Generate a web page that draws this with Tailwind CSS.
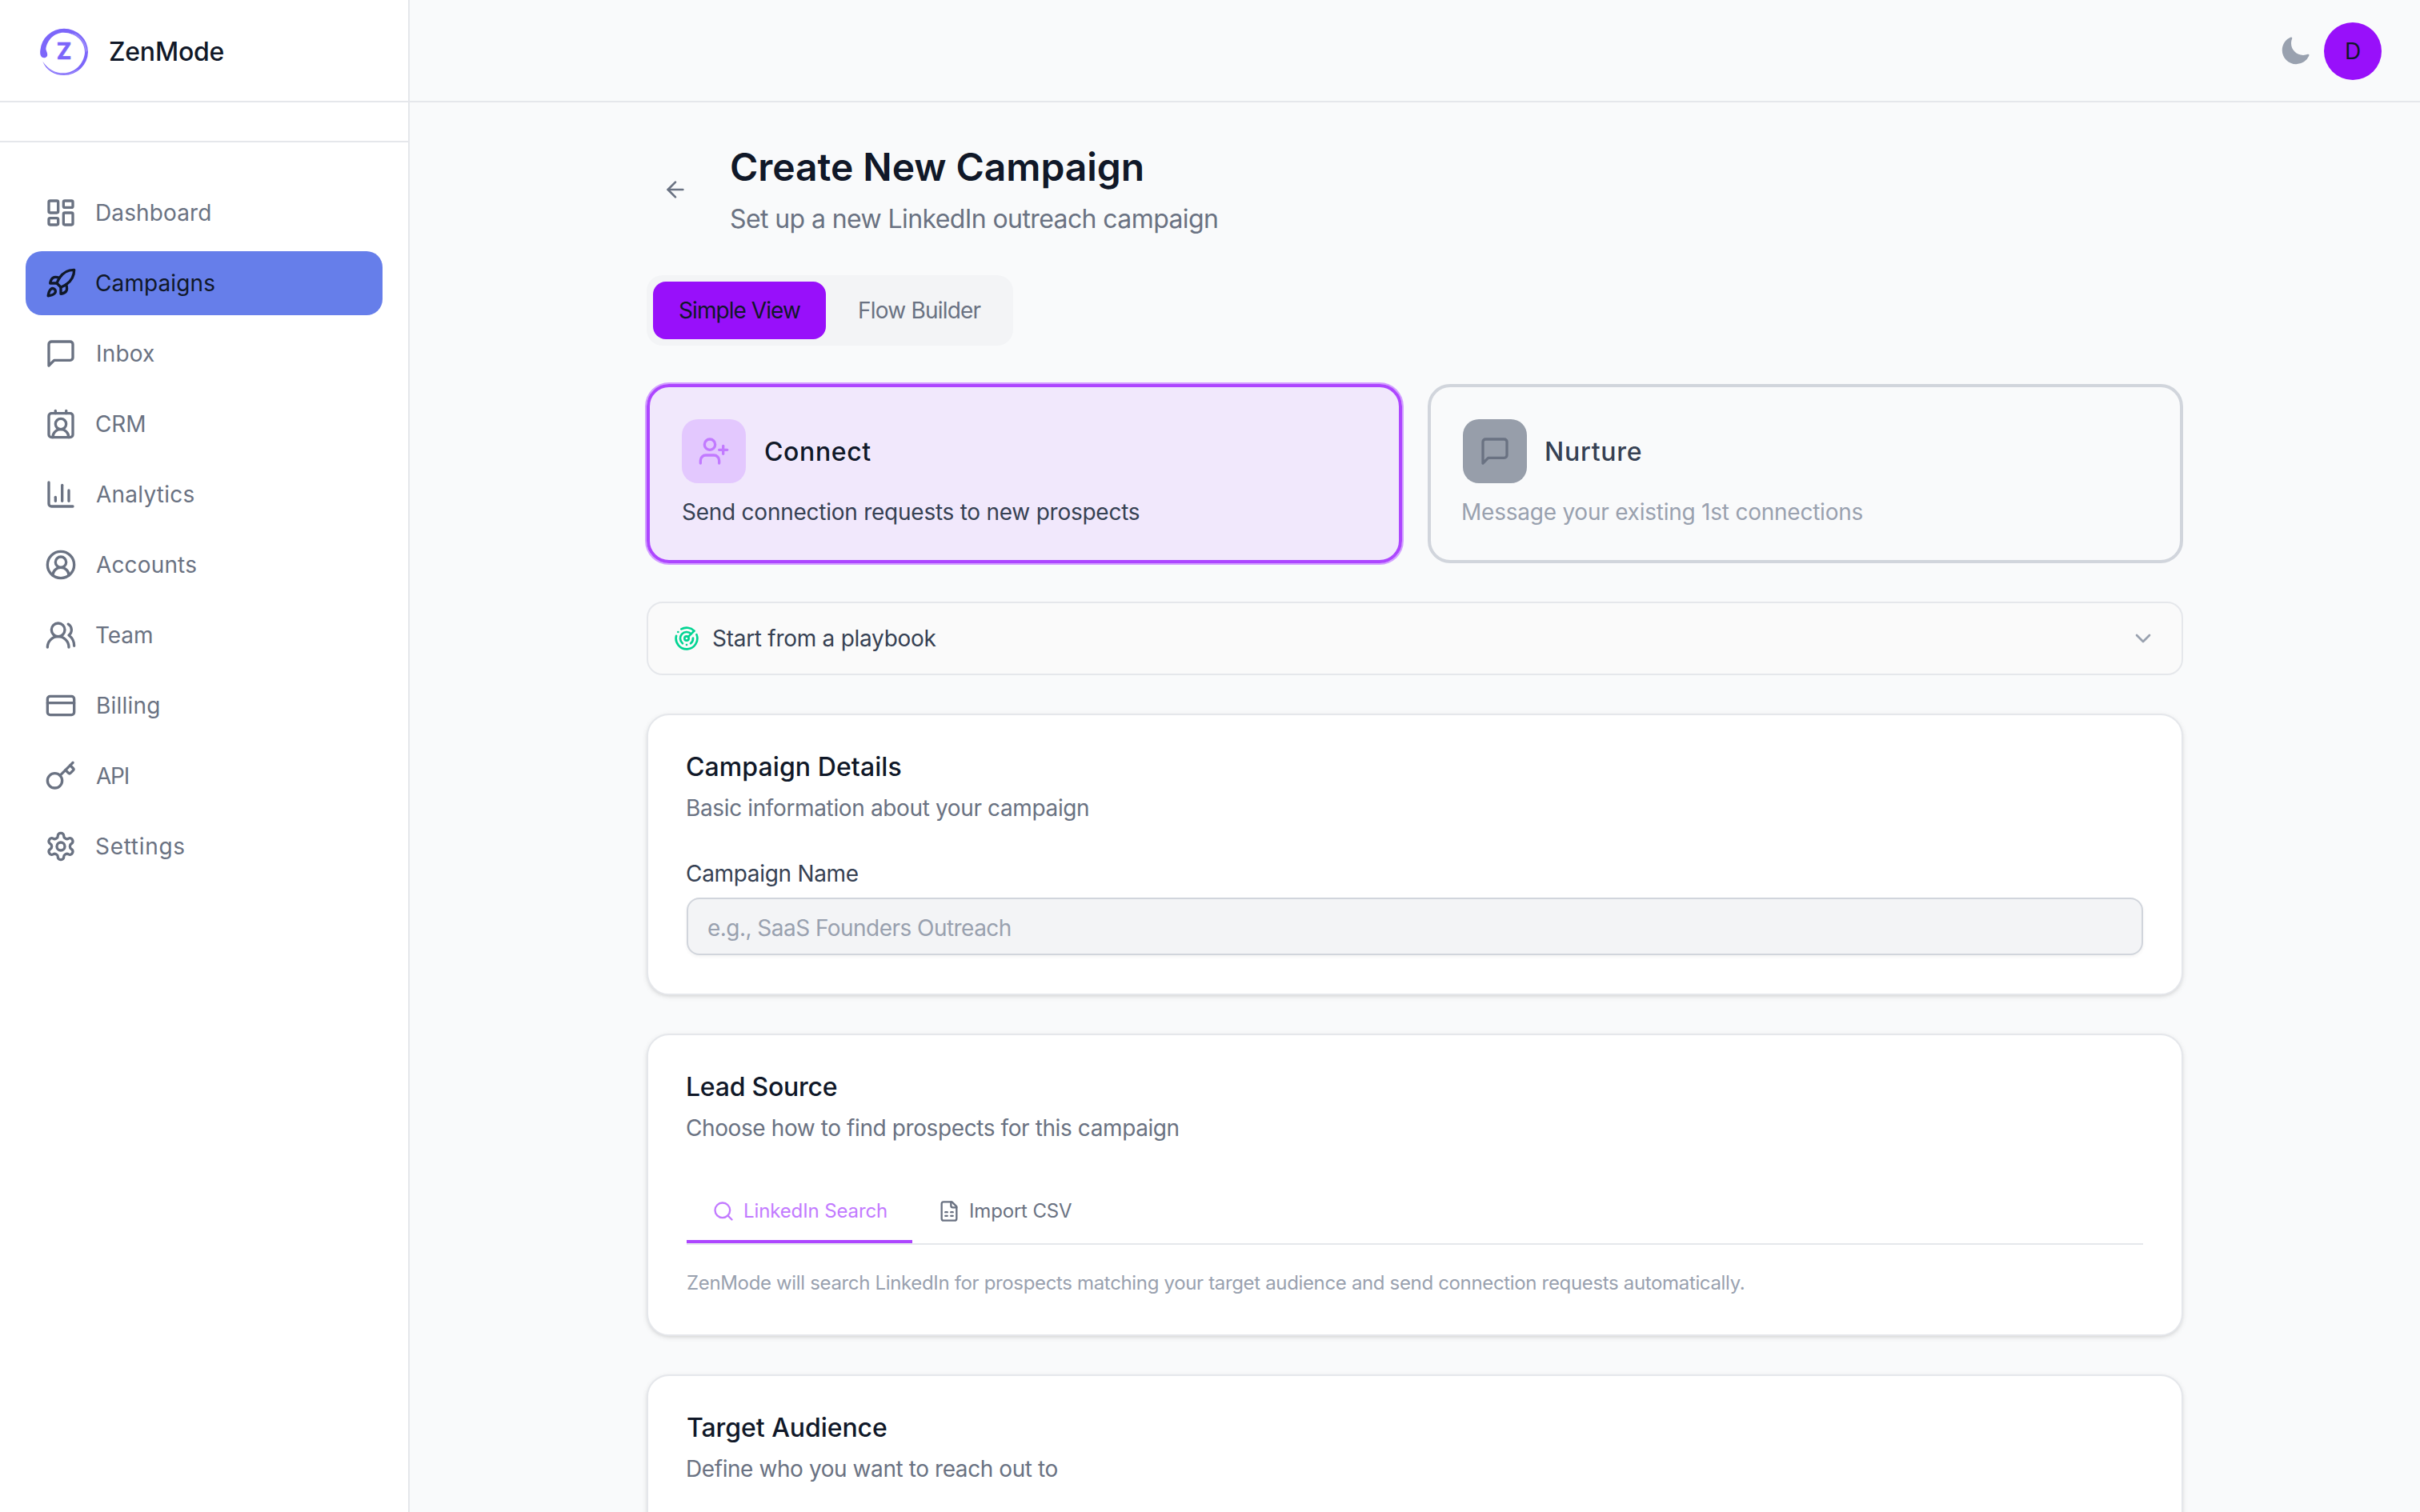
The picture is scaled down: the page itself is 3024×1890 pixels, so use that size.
<!DOCTYPE html>
<html lang="en">
<head>
    <meta charset="UTF-8">
    <meta name="viewport" content="width=device-width, initial-scale=1.0">
    <title>ZenMode - Create New Campaign</title>
    <script src="https://cdn.jsdelivr.net/npm/@tailwindcss/browser@4"></script>
</head>
<body class="flex h-screen overflow-hidden bg-gray-50 font-['Inter',sans-serif] text-[28px] leading-10 text-gray-900">
    <!-- Sidebar -->
    <aside class="flex w-128 shrink-0 flex-col border-r-2 border-gray-200 bg-white">
        <div class="flex h-32 shrink-0 items-center gap-6 border-b-2 border-gray-200 px-12 pt-0.5">
            <svg class="size-16 shrink-0" viewBox="24 36 192 192">
                <path fill="#7c66fa" d="M34 151C30 145 30 135 31 128A89 88 0 0 1 120 47A90 88 0 0 1 210 135A90 88 0 0 1 120 222C84 222 52 202 40 170C60 200 86 214 118 214C160 214 194 180 198 138C199 96 166 63 118 62C84 62 56 90 52 124C54 134 60 142 57 150C52 158 40 160 34 151Z"/>
                <path fill="none" stroke="#fff" stroke-width="1.5" stroke-opacity=".6" d="M58 194C76 211 98 218 122 218C142 217 158 211 172 201M150 66C180 77 200 102 202 136M160 66C186 79 204 104 205 132"/>
                <text x="120" y="162" text-anchor="middle" font-family="Inter, sans-serif" font-weight="700" font-size="84" fill="#7c66fa" stroke="#7c66fa" stroke-width="2">Z</text>
            </svg>
            <span class="pt-0.5 text-[32px] font-medium tracking-[-0.0066em]">ZenMode</span>
        </div>
        <div class="h-[50px] shrink-0 border-b-2 border-gray-200"></div>
        <nav class="flex flex-col gap-2 px-8 pt-12 text-gray-500">
            <a class="flex h-20 items-center gap-[23px] rounded-[20px] px-6">
                <svg class="size-10" viewBox="0 0 24 24" fill="none" stroke="currentColor" stroke-width="2" stroke-linecap="round" stroke-linejoin="round"><rect width="7" height="9" x="3" y="3" rx="1"/><rect width="7" height="5" x="14" y="3" rx="1"/><rect width="7" height="9" x="14" y="12" rx="1"/><rect width="7" height="5" x="3" y="16" rx="1"/></svg>
                <span class="tracking-[0.004em]">Dashboard</span>
            </a>
            <a class="flex h-20 items-center gap-[23px] rounded-[20px] bg-[#667eea] px-6 text-gray-900">
                <svg class="size-10" viewBox="0 0 24 24" fill="none" stroke="currentColor" stroke-width="2" stroke-linecap="round" stroke-linejoin="round"><path d="M4.5 16.5c-1.5 1.26-2 5-2 5s3.74-.5 5-2c.71-.84.7-2.13-.09-2.91a2.18 2.18 0 0 0-2.91-.09z"/><path d="m12 15-3-3a22 22 0 0 1 2-3.95A12.88 12.88 0 0 1 22 2c0 2.72-.78 7.5-6 11a22.35 22.35 0 0 1-4 2z"/><path d="M9 12H4s.55-3.03 2-4c1.62-1.08 5 0 5 0"/><path d="M12 15v5s3.03-.55 4-2c1.08-1.62 0-5 0-5"/></svg>
                <span class="tracking-[0.0036em]">Campaigns</span>
            </a>
            <a class="flex h-20 items-center gap-6 rounded-[20px] px-6">
                <svg class="size-10" viewBox="0 0 24 24" fill="none" stroke="currentColor" stroke-width="2" stroke-linecap="round" stroke-linejoin="round"><path d="M21 15a2 2 0 0 1-2 2H7l-4 4V5a2 2 0 0 1 2-2h14a2 2 0 0 1 2 2z"/></svg>
                <span class="tracking-[0.006em]">Inbox</span>
            </a>
            <a class="flex h-20 items-center gap-[23px] rounded-[20px] px-6">
                <svg class="size-10" viewBox="0 0 24 24" fill="none" stroke="currentColor" stroke-width="2" stroke-linecap="round" stroke-linejoin="round"><path d="M16 2v2"/><path d="M17.915 22a6 6 0 0 0-12 0"/><path d="M8 2v2"/><circle cx="12" cy="12" r="4"/><rect x="3" y="4" width="18" height="18" rx="2"/></svg>
                <span class="tracking-[-0.0062em]">CRM</span>
            </a>
            <a class="flex h-20 items-center gap-6 rounded-[20px] px-6">
                <svg class="size-10" viewBox="0 0 24 24" fill="none" stroke="currentColor" stroke-width="2" stroke-linecap="round" stroke-linejoin="round"><path d="M3 3v16a2 2 0 0 0 2 2h16"/><path d="M18 17V9"/><path d="M13 17V5"/><path d="M8 17v-3"/></svg>
                <span class="tracking-[0.0084em]">Analytics</span>
            </a>
            <a class="flex h-20 items-center gap-6 rounded-[20px] px-6">
                <svg class="size-10" viewBox="0 0 24 24" fill="none" stroke="currentColor" stroke-width="2" stroke-linecap="round" stroke-linejoin="round"><path d="M18 20a6 6 0 0 0-12 0"/><circle cx="12" cy="10" r="4"/><circle cx="12" cy="12" r="10"/></svg>
                <span class="tracking-[0.0055em]">Accounts</span>
            </a>
            <a class="flex h-20 items-center gap-[23px] rounded-[20px] px-6">
                <svg class="size-10" viewBox="0 0 24 24" fill="none" stroke="currentColor" stroke-width="2" stroke-linecap="round" stroke-linejoin="round"><path d="M18 21a8 8 0 0 0-16 0"/><circle cx="10" cy="8" r="5"/><path d="M22 20c0-3.37-2-6.5-4-8a5 5 0 0 0-.45-8.3"/></svg>
                <span class="tracking-[-0.0029em]">Team</span>
            </a>
            <a class="flex h-20 items-center gap-6 rounded-[20px] px-6">
                <svg class="size-10" viewBox="0 0 24 24" fill="none" stroke="currentColor" stroke-width="2" stroke-linecap="round" stroke-linejoin="round"><rect width="20" height="14" x="2" y="5" rx="2"/><path d="M2 10h20"/></svg>
                <span class="tracking-[0.007em]">Billing</span>
            </a>
            <a class="flex h-20 items-center gap-6 rounded-[20px] px-6">
                <svg class="size-10" viewBox="0 0 24 24" fill="none" stroke="currentColor" stroke-width="2" stroke-linecap="round" stroke-linejoin="round"><path d="m15.5 7.5 2.3 2.3a1 1 0 0 0 1.4 0l2.1-2.1a1 1 0 0 0 0-1.4L19 4"/><path d="m21 2-9.6 9.6"/><circle cx="7.5" cy="15.5" r="5.5"/></svg>
                <span class="tracking-[-0.0433em]">API</span>
            </a>
            <a class="flex h-20 items-center gap-[23px] rounded-[20px] px-6">
                <svg class="size-10" viewBox="0 0 24 24" fill="none" stroke="currentColor" stroke-width="2" stroke-linecap="round" stroke-linejoin="round"><path d="M12.22 2h-.44a2 2 0 0 0-2 2v.18a2 2 0 0 1-1 1.73l-.43.25a2 2 0 0 1-2 0l-.15-.08a2 2 0 0 0-2.73.73l-.22.38a2 2 0 0 0 .73 2.73l.15.1a2 2 0 0 1 1 1.72v.51a2 2 0 0 1-1 1.74l-.15.09a2 2 0 0 0-.73 2.73l.22.38a2 2 0 0 0 2.73.73l.15-.08a2 2 0 0 1 2 0l.43.25a2 2 0 0 1 1 1.73V20a2 2 0 0 0 2 2h.44a2 2 0 0 0 2-2v-.18a2 2 0 0 1 1-1.73l.43-.25a2 2 0 0 1 2 0l.15.08a2 2 0 0 0 2.73-.73l.22-.39a2 2 0 0 0-.73-2.73l-.15-.08a2 2 0 0 1-1-1.74v-.5a2 2 0 0 1 1-1.74l.15-.09a2 2 0 0 0 .73-2.73l-.22-.38a2 2 0 0 0-2.73-.73l-.15.08a2 2 0 0 1-2 0l-.43-.25a2 2 0 0 1-1-1.73V4a2 2 0 0 0-2-2z"/><circle cx="12" cy="12" r="3"/></svg>
                <span class="tracking-[0.0251em]">Settings</span>
            </a>
        </nav>
    </aside>

    <div class="flex min-w-0 flex-1 flex-col">
        <!-- Header -->
        <header class="flex h-32 shrink-0 items-center justify-end gap-4 border-b-2 border-gray-200 px-12 pt-0.5">
            <svg class="size-10 text-gray-400" viewBox="0 0 24 24" fill="currentColor"><path d="M9.528 1.718a.75.75 0 0 1 .162.819A8.97 8.97 0 0 0 9 6a9 9 0 0 0 9 9 8.97 8.97 0 0 0 3.463-.69.75.75 0 0 1 .981.98 10.503 10.503 0 0 1-9.694 6.46c-5.799 0-10.5-4.7-10.5-10.5 0-4.368 2.667-8.112 6.46-9.694a.75.75 0 0 1 .818.162Z"/></svg>
            <div class="flex size-18 items-center justify-center rounded-full bg-purple-600">D</div>
        </header>

        <!-- Main Content -->
        <main class="min-h-0 flex-1 overflow-hidden pt-12">
            <div class="mx-auto flex w-[1920px] flex-col gap-12">
                <div class="flex items-center gap-8">
                    <button class="flex size-18 items-center justify-center text-gray-500">
                        <svg class="size-8" viewBox="0 0 24 24" fill="none" stroke="currentColor" stroke-width="2" stroke-linecap="round" stroke-linejoin="round"><path d="m12 19-7-7 7-7"/><path d="M19 12H5"/></svg>
                    </button>
                    <div>
                        <h1 class="text-5xl leading-[66px] font-semibold tracking-[-0.0014em]">Create New Campaign</h1>
                        <p class="mt-2 text-[32px] leading-12 tracking-[-0.0187em] text-gray-500">Set up a new LinkedIn outreach campaign</p>
                    </div>
                </div>

                <!-- View Toggle -->
                <div class="-mt-0.5 flex h-22 w-[458px] gap-2 rounded-[20px] bg-gray-100 p-2">
                    <button class="w-54 rounded-2xl bg-purple-600 pl-8 text-left tracking-[-0.0333em] whitespace-nowrap">Simple View</button>
                    <button class="w-[218px] rounded-2xl pl-8 text-left tracking-[-0.0282em] whitespace-nowrap text-gray-500">Flow Builder</button>
                </div>

                <!-- Campaign Type -->
                <div class="grid grid-cols-2 gap-8">
                    <div class="h-56 rounded-[28px] border-4 border-purple-500 bg-purple-500/10 p-10 ring-2 ring-purple-500/50">
                        <div class="flex items-center gap-[23px]">
                            <div class="flex size-20 items-center justify-center rounded-[20px] bg-purple-500/20 text-purple-400">
                                <svg class="size-10" viewBox="0 0 24 24" fill="none" stroke="currentColor" stroke-width="2" stroke-linecap="round" stroke-linejoin="round"><path d="M16 21v-2a4 4 0 0 0-4-4H6a4 4 0 0 0-4 4v2"/><circle cx="9" cy="7" r="4"/><path d="M19 8v6"/><path d="M22 11h-6"/></svg>
                            </div>
                            <h3 class="pt-0.5 text-[32px] font-medium tracking-[0.0195em]">Connect</h3>
                        </div>
                        <p class="mt-4 tracking-[-0.0089em] text-gray-700">Send connection requests to new prospects</p>
                    </div>
                    <div class="h-56 rounded-[28px] border-4 border-gray-300 p-10">
                        <div class="flex items-center gap-[22px]">
                            <div class="flex size-20 items-center justify-center rounded-[20px] bg-[#979eaa] text-gray-500">
                                <svg class="size-10" viewBox="0 0 24 24" fill="none" stroke="currentColor" stroke-width="2" stroke-linecap="round" stroke-linejoin="round"><path d="M21 15a2 2 0 0 1-2 2H7l-4 4V5a2 2 0 0 1 2-2h14a2 2 0 0 1 2 2z"/></svg>
                            </div>
                            <h3 class="pt-0.5 text-[32px] font-medium tracking-[0.0235em] text-gray-700">Nurture</h3>
                        </div>
                        <p class="mt-4 -ml-0.5 tracking-[-0.0084em] text-gray-400">Message your existing 1st connections</p>
                    </div>
                </div>

                <!-- Playbook -->
                <div class="flex h-23 items-center gap-4 rounded-[20px] border-2 border-gray-200 bg-neutral-50 px-8">
                    <svg class="size-8 text-emerald-400" viewBox="0 0 24 24" fill="none" stroke="currentColor" stroke-width="2" stroke-linecap="round" stroke-linejoin="round"><path d="M19.07 4.93A10 10 0 0 0 6.99 3.34"/><path d="M4 6h.01"/><path d="M2.29 9.62A10 10 0 1 0 21.31 8.35"/><path d="M16.24 7.76A6 6 0 1 0 8.23 16.67"/><path d="M12 18h.01"/><path d="M17.99 11.66A6 6 0 0 1 15.77 16.67"/><circle cx="12" cy="12" r="2"/><path d="m13.41 10.59 5.66-5.66"/></svg>
                    <span class="flex-1 tracking-[-0.0098em] text-gray-700">Start from a playbook</span>
                    <svg class="size-8 text-gray-400" viewBox="0 0 24 24" fill="none" stroke="currentColor" stroke-width="2" stroke-linecap="round" stroke-linejoin="round"><path d="m6 9 6 6 6-6"/></svg>
                </div>

                <!-- Campaign Details -->
                <section class="rounded-[28px] border-2 border-gray-200 bg-white p-12 shadow-[0_2px_6px_rgba(0,0,0,0.1),0_2px_4px_-2px_rgba(0,0,0,0.1)]">
                    <h2 class="-ml-px text-[32px] leading-[34px] font-medium tracking-[0.0026em]">Campaign Details</h2>
                    <p class="mt-3.5 -ml-px tracking-[-0.0131em] text-gray-500">Basic information about your campaign</p>
                    <label class="mt-12 -ml-px block leading-7 tracking-[-0.0112em] text-gray-700">Campaign Name</label>
                    <input type="text" placeholder="e.g., SaaS Founders Outreach" class="mt-4 block h-18 w-full rounded-2xl border-2 border-gray-300 bg-gray-100 px-6 pt-1 tracking-[-0.0192em] shadow-[0_2px_4px_rgba(0,0,0,0.05)] placeholder:text-gray-400">
                </section>

                <!-- Lead Source -->
                <section class="rounded-[28px] border-2 border-gray-200 bg-white p-12 shadow-[0_2px_6px_rgba(0,0,0,0.1),0_2px_4px_-2px_rgba(0,0,0,0.1)]">
                    <h2 class="-ml-px text-[32px] leading-[34px] font-medium tracking-[-0.0074em]">Lead Source</h2>
                    <p class="mt-3.5 -ml-px tracking-[-0.0144em] text-gray-500">Choose how to find prospects for this campaign</p>
                    <div class="mt-12 flex h-[78px] border-b-2 border-gray-200 text-2xl">
                        <button class="flex w-[282px] items-center gap-[11px] border-b-4 border-purple-500 pl-8 whitespace-nowrap text-purple-400">
                            <svg class="size-7" viewBox="0 0 24 24" fill="none" stroke="currentColor" stroke-width="2" stroke-linecap="round" stroke-linejoin="round"><circle cx="11" cy="11" r="8"/><path d="m21 21-4.3-4.3"/></svg>
                            <span class="tracking-[-0.0048em]">LinkedIn Search</span>
                        </button>
                        <button class="flex items-center gap-[11px] border-b-4 border-transparent px-8 whitespace-nowrap text-gray-500">
                            <svg class="size-7" viewBox="0 0 24 24" fill="none" stroke="currentColor" stroke-width="2" stroke-linecap="round" stroke-linejoin="round"><path d="M15 2H6a2 2 0 0 0-2 2v16a2 2 0 0 0 2 2h12a2 2 0 0 0 2-2V7Z"/><path d="M14 2v4a2 2 0 0 0 2 2h4"/><path d="M8 13h2"/><path d="M14 13h2"/><path d="M8 17h2"/><path d="M14 17h2"/></svg>
                            <span class="tracking-[-0.007em]">Import CSV</span>
                        </button>
                    </div>
                    <p class="mt-8 text-2xl leading-8 tracking-[-0.0142em] text-gray-400">ZenMode will search LinkedIn for prospects matching your target audience and send connection requests automatically.</p>
                </section>

                <!-- Target Audience -->
                <section class="h-96 shrink-0 rounded-[28px] border-2 border-gray-200 bg-white p-12 shadow-[0_2px_6px_rgba(0,0,0,0.1),0_2px_4px_-2px_rgba(0,0,0,0.1)]">
                    <h2 class="text-[32px] leading-[34px] font-medium tracking-[-0.0018em]">Target Audience</h2>
                    <p class="mt-3.5 -ml-px tracking-[-0.0151em] text-gray-500">Define who you want to reach out to</p>
                </section>
            </div>
        </main>
    </div>
</body>
</html>
